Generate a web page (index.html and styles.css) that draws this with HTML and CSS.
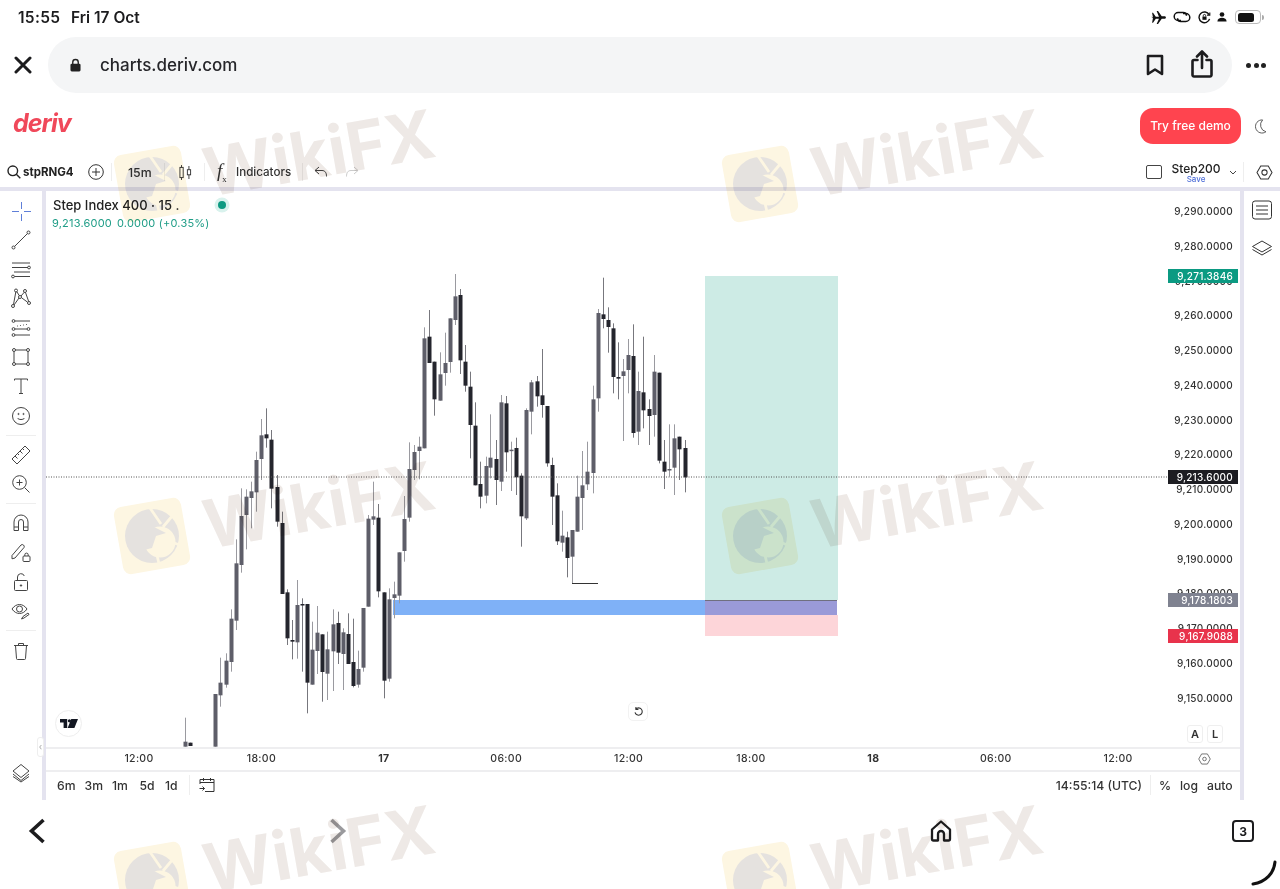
FILE: index.html
```html
<!DOCTYPE html>
<html lang="en">
<head>
<meta charset="utf-8">
<title>charts.deriv.com</title>
<link rel="stylesheet" href="styles.css">
</head>
<body>
<div class="page">
  <div class="status">
    <span class="clock">15:55</span><span class="date">Fri 17 Oct</span>
    <div class="status-icons">
      <svg class="i-plane" viewBox="0 0 16 14"><path d="M0 6l2 1-.9-5h1l3 4.300h3.400L6 0h1.500l4 5.600h2.700c1 0 1.800.6 1.800 1.400s-.8 1.400-1.800 1.400h-2.700L7.500 14H6l2.500-5.600H5.100L2.100 12.600h-1L2 7.700z" fill="#111"/></svg>
      <svg class="i-link" viewBox="0 0 18 12" fill="none" stroke="#111" stroke-width="1.500"><path d="M8 9.500H5.200a4 4 0 0 1 0-8h5a3.300 3.300 0 0 1 3.300 3.200"/><path d="M10 2.500h2.800a4 4 0 0 1 0 8h-5a3.300 3.300 0 0 1-3.300-3.200"/></svg>
      <svg class="i-lock" viewBox="0 0 14 14" fill="none" stroke="#111" stroke-width="1.500"><path d="M12.500 8.500A5.800 5.800 0 1 1 12 4"/><path d="M12.700 1.500V4.500H9.700" stroke-width="1.200"/><rect x="4.800" y="6" width="4.400" height="3.500" fill="#111" stroke="none"/><path d="M5.700 6V5a1.300 1.300 0 0 1 2.600 0v1" stroke-width="1"/></svg>
      <svg class="i-person" viewBox="0 0 12 12"><circle cx="6" cy="3" r="2.800" fill="#111"/><path d="M.5 11.500c0-3 2.500-4.500 5.500-4.500s5.500 1.500 5.500 4.500z" fill="#111"/></svg>
      <div class="battery"><div class="battery-fill"></div></div><div class="battery-nub"></div>
    </div>
  </div>

  <div class="browser">
    <svg class="i-close" viewBox="0 0 18 18" fill="none" stroke="#1c1c1e" stroke-width="3" stroke-linecap="round"><path d="M2 2l14 14M16 2L2 16"/></svg>
    <div class="pill">
      <svg class="i-padlock" viewBox="0 0 12 14"><rect x="0.500" y="5.500" width="11" height="8.500" rx="1.500" fill="#222"/><path d="M3 6V4a3 3 0 0 1 6 0v2" fill="none" stroke="#222" stroke-width="1.500"/></svg>
      <span class="url">charts.deriv.com</span>
      <svg class="i-bookmark" viewBox="0 0 18 22" fill="none" stroke="#1c1c1e" stroke-width="2.600" stroke-linejoin="round"><path d="M2 2h14v18l-7-4.500L2 20z"/></svg>
      <svg class="i-share" viewBox="0 0 22 28" fill="none" stroke="#1c1c1e" stroke-width="2.600" stroke-linecap="round" stroke-linejoin="round"><path d="M6.500 10H3a1.500 1.500 0 0 0-1.500 1.500v13.500A1.500 1.500 0 0 0 3 26.500h16a1.500 1.500 0 0 0 1.500-1.500V11.500A1.500 1.500 0 0 0 19 10h-3.500"/><path d="M11 18V2M6 6.500L11 1.500l5 5"/></svg>
    </div>
    <div class="more"><i></i><i></i><i></i></div>
  </div>

  <header class="site">
    <span class="logo">deriv</span>
    <button class="demo">Try free demo</button>
    <svg class="i-moon" viewBox="0 0 16 18" fill="none" stroke="#555" stroke-width="1.100"><path d="M11 1.500A7.500 7.500 0 1 0 14.800 15 8 8 0 0 1 11 1.500z"/></svg>
  </header>

  <div class="toolbar">
    <svg class="i-search" viewBox="0 0 14 14" fill="none" stroke="#222" stroke-width="1.400"><circle cx="5.800" cy="5.800" r="4.800"/><path d="M9.300 9.300L13.300 13.300"/></svg>
    <span class="symbol">stpRNG4</span>
    <svg class="i-plus" viewBox="0 0 16 16" fill="none" stroke="#333" stroke-width="1"><circle cx="8" cy="8" r="7.300"/><path d="M8 4v8M4 8h8"/></svg>
    <span class="sep sep-a"></span>
    <span class="tb-text tf">15m</span>
    <span class="sep sep-b"></span>
    <svg class="i-candles" viewBox="0 0 14 16" fill="none" stroke="#333" stroke-width="1"><rect x="1" y="2.500" width="3.500" height="11"/><path d="M2.700 0v2.500M2.700 13.500V16"/><rect x="9" y="5" width="3.500" height="5.500"/><path d="M10.700 1v4M10.700 10.500V15"/></svg>
    <span class="sep sep-c"></span>
    <span class="fx"><em>f</em><sub>x</sub></span>
    <span class="tb-text indicators">Indicators</span>
    <span class="sep sep-d"></span>
    <svg class="i-undo" viewBox="0 0 14 12" fill="none" stroke="#444" stroke-width="1"><path d="M5 1L1 4.500 5 8"/><path d="M1 4.500h7c3 0 4.500 2 4.500 6"/></svg>
    <svg class="i-redo" viewBox="0 0 14 12" fill="none" stroke="#ccc" stroke-width="1"><path d="M9 1l4 3.500L9 8"/><path d="M13 4.500H6C3 4.500 1.500 6.500 1.500 10.500"/></svg>
    <svg class="i-check" viewBox="0 0 16 14" fill="none" stroke="#444" stroke-width="1"><rect x="0.500" y="0.500" width="15" height="13" rx="1.500"/></svg>
    <div class="template"><span class="template-name">Step200</span><span class="template-save">Save</span></div>
    <svg class="i-chev" viewBox="0 0 8 5" fill="none" stroke="#444" stroke-width="1"><path d="M1 1l3 3 3-3"/></svg>
    <span class="sep sep-e"></span>
    <svg class="i-hex" viewBox="0 0 18 16" fill="none" stroke="#333" stroke-width="1.100"><path d="M5 1h8l4 7-4 7H5L1 8z"/><circle cx="9" cy="8" r="2.800"/></svg>
  </div>

  <div class="workspace">
    <aside class="tools">
      <svg class="tool" viewBox="0 0 20 20" fill="none" stroke="#5f7fd8" stroke-width="1"><path d="M10.500 1v7M10.500 13v7M1 10.500h7M13 10.500h7"/></svg>
      <svg class="tool" viewBox="0 0 20 20" fill="none" stroke="#444" stroke-width="1"><circle cx="2.500" cy="17.500" r="1.500"/><circle cx="17.500" cy="2.500" r="1.500"/><path d="M3.600 16.400L16.400 3.600"/></svg>
      <svg class="tool" viewBox="0 0 20 20" fill="none" stroke="#444" stroke-width="1"><path d="M1 4h18M1 8.500h16M3 13h16M3.500 17.500H19"/><circle cx="18" cy="8.500" r="1.400"/><circle cx="2" cy="17.500" r="1.400"/></svg>
      <svg class="tool" viewBox="0 0 20 20" fill="none" stroke="#444" stroke-width="1"><circle cx="2" cy="18" r="1.500"/><circle cx="5" cy="2.500" r="1.500"/><circle cx="14" cy="3" r="1.500"/><circle cx="18" cy="15" r="1.500"/><circle cx="9" cy="9" r="1.500"/><path d="M2.500 16.500L4.800 4M5.800 3.700L8.300 7.700M10 8l3.300-3.800M14.500 4.500L17.700 13.500M10.400 9.600L16.700 14.300M3 17L8 10"/></svg>
      <svg class="tool" viewBox="0 0 20 20" fill="none" stroke="#444" stroke-width="1"><circle cx="2.500" cy="3" r="1.400"/><circle cx="2.500" cy="11" r="1.400"/><circle cx="17.500" cy="11" r="1.400"/><circle cx="2.500" cy="17" r="1.400"/><path d="M4 3h15M4 11h12M4 17h15"/><path d="M6 8h1M9 7.500h1M12 7h1M15 6.500h1" stroke-width="0.800"/></svg>
      <svg class="tool" viewBox="0 0 20 20" fill="none" stroke="#444" stroke-width="1"><rect x="3" y="3" width="14" height="14"/><circle cx="3" cy="3" r="1.500" fill="#fff"/><circle cx="17" cy="3" r="1.500" fill="#fff"/><circle cx="3" cy="17" r="1.500" fill="#fff"/><circle cx="17" cy="17" r="1.500" fill="#fff"/></svg>
      <svg class="tool" viewBox="0 0 20 20" fill="none" stroke="#444" stroke-width="1"><path d="M3.500 4.500V3h13v1.500M10 3v14M8 17.500h4"/></svg>
      <svg class="tool" viewBox="0 0 20 20" fill="none" stroke="#444" stroke-width="1"><circle cx="10" cy="10" r="8.500"/><path d="M6.500 12c1 2 6 2 7 0"/><circle cx="7.500" cy="8" r=".6"/><circle cx="12.500" cy="8" r=".6"/></svg>
      <div class="tool-sep"></div>
      <svg class="tool" viewBox="0 0 20 20" fill="none" stroke="#444" stroke-width="1"><path d="M1 14L14 1l5 5L6 19z"/><path d="M4 11l2.500 2.500M6.500 8.500l1.500 1.500M9 6l2.500 2.500M11.500 3.500L13 5"/></svg>
      <svg class="tool" viewBox="0 0 20 20" fill="none" stroke="#444" stroke-width="1"><circle cx="8.500" cy="8.500" r="6.800"/><path d="M8.500 5.500v6M5.500 8.500h6M13.500 13.500l5 5"/></svg>
      <div class="tool-sep"></div>
      <svg class="tool" viewBox="0 0 20 20" fill="none" stroke="#444" stroke-width="1"><path d="M3 17.500V9a7 7 0 0 1 14 0v8.500h-4.500V9a2.500 2.500 0 0 0-5 0v8.500z"/><path d="M3 14h4.500M12.500 14H17"/></svg>
      <svg class="tool" viewBox="0 0 20 20" fill="none" stroke="#444" stroke-width="1"><path d="M1 12.500L10 2a2 2 0 0 1 3 2.500L4 15l-3 .8z"/><rect x="12" y="13" width="7" height="5.500" rx="1"/><path d="M13.800 13v-1.200a1.700 1.700 0 0 1 3.400 0V13"/></svg>
      <svg class="tool" viewBox="0 0 20 20" fill="none" stroke="#444" stroke-width="1"><rect x="3.500" y="8.500" width="13" height="10" rx="1"/><path d="M6.500 8.500V5a3.500 3.500 0 0 1 6.800-1"/><circle cx="10" cy="13.500" r=".7" fill="#444"/></svg>
      <svg class="tool" viewBox="0 0 20 20" fill="none" stroke="#444" stroke-width="1"><path d="M1 8c4-6 11-6 15 0-4 6-11 6-15 0z"/><circle cx="8.500" cy="8" r="3"/><path d="M10.500 18l2.500-1 5-3.500-1-1.500-5 3.500z"/></svg>
      <div class="tool-sep"></div>
      <svg class="tool" viewBox="0 0 20 20" fill="none" stroke="#444" stroke-width="1"><path d="M3 4.500h14M7.500 4.500V2.500h5v2M4.500 4.500l1 13a1 1 0 0 0 1 1h7a1 1 0 0 0 1-1l1-13"/></svg>
      <svg class="tool tool-bottom" viewBox="0 0 20 20" fill="none" stroke="#444" stroke-width="1"><path d="M10 1.500L18 8l-8 6.500L2 8z"/><path d="M2 11l8 6.500 8-6.500M2 13.500l8 5.500 8-5.500"/></svg>
    </aside>

    <main class="chart-col">
      <div class="chart">
        <svg id="plot" class="plot" viewBox="46 191 1194 556">
          <rect x="705" y="276" width="133" height="324" fill="#cdebe5"/>
          <rect x="393" y="600" width="312" height="15" fill="#7fb1f7"/>
          <rect x="705" y="600" width="132" height="15" fill="#9a9ad8"/>
          <rect x="705" y="615" width="133" height="21" fill="#fdd5d9"/>
          <path d="M705 600.500H837" stroke="#6f6f80"/>
          <g id="candles"></g>
          <path d="M46 477H1168" stroke="#555" stroke-dasharray="1 1.500"/>
          <g id="axis" class="axis"></g>
          <rect x="1168" y="269" width="70" height="14" fill="#0b9a82"/>
          <text class="tag" x="1233" y="280">9,271.3846</text>
          <rect x="1168" y="470" width="70" height="14" fill="#1d1d22"/>
          <text class="tag" x="1233" y="481">9,213.6000</text>
          <rect x="1168" y="593" width="70" height="14" fill="#7f8290"/>
          <text class="tag" x="1233" y="604">9,178.1803</text>
          <rect x="1168" y="629" width="70" height="14" fill="#e8334c"/>
          <text class="tag" x="1233" y="640">9,167.9088</text>
        </svg>
        <div class="legend">
          <div class="legend-title">Step Index 400 · 15 .</div>
          <div class="legend-price"><span>9,213.6000</span><span>0.0000 (+0.35%)</span></div>
        </div>
        <span class="live"></span>
        <div class="tv">
          <svg viewBox="0 0 20 12"><path d="M0 1h8v10H4V5H0zM8.500 11L12.500 1H20l-4 10z" fill="#131722"/><circle cx="10.500" cy="3" r="1.800" fill="#131722"/></svg>
        </div>
        <div class="reset">
          <svg viewBox="0 0 12 12" fill="none" stroke="#333" stroke-width="1.200"><path d="M3 3.500a4 4 0 1 1-.8 3.500"/><path d="M3.200 1v2.700h2.700"/></svg>
        </div>
        <div class="scale-btns"><span>A</span><span>L</span></div>
        <div class="handle">‹</div>
      </div>
      <div class="time-axis">
        <span>12:00</span><span>18:00</span><b>17</b><span>06:00</span><span>12:00</span><span>18:00</span><b>18</b><span>06:00</span><span>12:00</span>
        <svg class="i-hex-small" viewBox="0 0 18 16" fill="none" stroke="#555" stroke-width="1.100"><path d="M5 1h8l4 7-4 7H5L1 8z"/><circle cx="9" cy="8" r="2.500"/></svg>
      </div>
      <div class="range-bar">
        <span class="r">6m</span><span class="r">3m</span><span class="r">1m</span><span class="r">5d</span><span class="r">1d</span>
        <span class="range-sep"></span>
        <svg class="i-cal" viewBox="0 0 16 16" fill="none" stroke="#333" stroke-width="1"><path d="M1 7V2.500h14V14.500H6M1 5.500h14M4.500 1v3M11.500 1v3M0.500 11.500h5M3.500 9.500l2 2-2 2"/></svg>
        <span class="clock-utc">14:55:14 (UTC)</span>
        <span class="range-sep range-sep-b"></span>
        <span class="r pct">%</span><span class="r log">log</span><span class="r auto">auto</span>
      </div>
    </main>

    <aside class="side">
      <svg class="side-icon" viewBox="0 0 20 20" fill="none" stroke="#333" stroke-width="1"><rect x="0.500" y="1" width="19" height="18" rx="2.500"/><path d="M4 6h12M4 10h12M4 14h12"/></svg>
      <svg class="side-icon" viewBox="0 0 20 20" fill="none" stroke="#333" stroke-width="1"><path d="M10 3l9.500 5.500L10 14 .5 8.500z"/><path d="M.5 11.500L10 17l9.500-5.500"/></svg>
    </aside>
  </div>

  <nav class="nav">
    <svg class="nav-back" viewBox="0 0 18 26" fill="none" stroke="#1c1c1e" stroke-width="3.600"><path d="M15.500 2L3.500 13l12 11"/></svg>
    <svg class="nav-fwd" viewBox="0 0 18 26" fill="none" stroke="#9a9a9d" stroke-width="3.600"><path d="M2.500 2l12 11-12 11"/></svg>
    <svg class="nav-home" viewBox="0 0 22 22" fill="none" stroke="#1c1c1e" stroke-width="2.300" stroke-linejoin="round"><path d="M11 1.500L2 9.500V19a1.500 1.500 0 0 0 1.500 1.500H8V14a3 3 0 0 1 6 0v6.500h4.500A1.500 1.500 0 0 0 20 19V9.500z"/></svg>
    <div class="nav-tabs">3</div>
    <svg class="nav-corner" viewBox="0 0 26 26" fill="none" stroke="#111" stroke-width="3" stroke-linecap="round"><path d="M24 2c-1 11-9 20-22 22"/></svg>
  </nav>

  <svg class="watermark" viewBox="0 0 1280 889">
    <defs>
      <g id="wm">
        <rect x="-34" y="-34" width="68" height="68" rx="8" transform="rotate(-10)" fill="#fdf6e2"/>
        <circle r="27" fill="#e5e2df"/>
        <circle cx="8" cy="6" r="15.500" fill="#fdf6e2"/>
        <path d="M-8-14L14-3 4 0 0 12-8 14z" fill="#e5e2df"/>
        <path d="M-2-28L9-12M21-21L11-9M28 9L19 6M7 28L5 19" fill="none" stroke="#fdf6e2" stroke-width="2.800"/>
        <text class="wm-text" x="56" y="13" transform="rotate(-10 56 13)">WikiFX</text>
      </g>
    </defs>
    <use href="#wm" x="152" y="184"/>
    <use href="#wm" x="760" y="184"/>
    <use href="#wm" x="152" y="536"/>
    <use href="#wm" x="760" y="536"/>
    <use href="#wm" x="152" y="880"/>
    <use href="#wm" x="760" y="880"/>
  </svg>
</div>
<script src="chart.js"></script>
</body>
</html>
```

FILE: styles.css
```css
* { box-sizing: border-box; }
html, body { margin: 0; padding: 0; background: #fff; }
body { font-family: Inter, "Liberation Sans", sans-serif; color: #1c1c1e; overflow: hidden; }
svg { display: block; flex: none; }
.page { position: relative; width: 1280px; height: 889px; display: flex; flex-direction: column; overflow: hidden; }

/* status bar */
.status { height: 37px; display: flex; align-items: center; padding: 0 16px 3px 18px; font-size: 15.500px; font-weight: 600; }
.clock { width: 53px; letter-spacing: .3px; }
.status-icons { margin-left: auto; display: flex; align-items: center; }
.i-plane { width: 15px; height: 13px; }
.i-link { width: 18px; height: 12px; margin-left: 7px; }
.i-lock { width: 13px; height: 13px; margin-left: 7px; }
.i-person { width: 10px; height: 10px; margin-left: 6px; }
.battery { width: 26px; height: 14px; margin-left: 8px; border: 1px solid #bbb; border-radius: 4px; padding: 1.500px; }
.battery-fill { width: 16px; height: 100%; background: #111; border-radius: 2.500px; }
.battery-nub { width: 2px; height: 5px; background: #aaa; border-radius: 0 2px 2px 0; margin-left: 1px; }

/* browser bar */
.browser { height: 56px; display: flex; align-items: center; padding-left: 14px; }
.i-close { width: 18px; height: 18px; }
.pill { width: 1184px; height: 56px; margin-left: 16px; background: #f4f5f6; border-radius: 28px; display: flex; align-items: center; padding: 0 19px 0 22px; }
.i-padlock { width: 11px; height: 14px; }
.url { margin-left: 19px; font-size: 17px; font-weight: 500; color: #26262a; }
.i-bookmark { width: 18px; height: 22px; margin-left: auto; }
.i-share { width: 22px; height: 28px; margin-left: 27px; margin-top: -2px; }
.more { display: flex; gap: 2.500px; margin-left: 14px; }
.more i { width: 5px; height: 5px; background: #222; border-radius: 50%; }

/* deriv header */
.site { height: 57px; display: flex; align-items: center; padding: 3px 13px 0 13px; }
.logo { font-size: 25px; font-weight: 700; font-style: italic; color: #f0485a; letter-spacing: -1px; }
.demo { margin-left: auto; width: 101px; height: 36px; margin-top: 5px; border: 0; border-radius: 13px; background: #ff444f; color: #fff; font: 500 12px Inter, sans-serif; padding: 0; }
.i-moon { width: 14px; height: 17px; margin-left: 12px; margin-top: 7px; }

/* toolbar */
.toolbar { height: 41px; display: flex; align-items: center; padding-left: 7px; padding-top: 7px; border-bottom: 4px solid #e4e3ef; }
.i-search { width: 14px; height: 14px; }
.symbol { margin-left: 2px; width: 54px; font-size: 11.500px; font-weight: 700; color: #222; white-space: nowrap; overflow: hidden; }
.i-plus { width: 16px; height: 16px; margin-left: 11px; }
.sep { width: 1px; height: 18px; background: #eee; }
.sep-a { margin-left: 7px; }
.tb-text { font-size: 12.300px; font-weight: 500; color: #333; }
.tf { margin-left: 16px; width: 25px; }
.sep-b { margin-left: 11px; }
.i-candles { width: 13px; height: 15px; margin-left: 14px; }
.sep-c { margin-left: 12px; }
.fx { margin-left: 12px; width: 19px; font-family: "Liberation Serif", serif; font-size: 19px; color: #333; line-height: 1; white-space: nowrap; }
.fx sub { font-size: 9px; }
.indicators { font-size: 11.600px; width: 55px; }
.sep-d { margin-left: 11px; }
.i-undo { width: 14px; height: 12px; margin-left: 11px; }
.i-redo { width: 14px; height: 12px; margin-left: 17px; }
.i-check { width: 16px; height: 14px; margin-left: auto; }
.template { width: 48px; margin-left: 10px; display: flex; flex-direction: column; align-items: center; line-height: 1; margin-top: 2px; }
.template-name { font-size: 12px; font-weight: 500; color: #222; }
.template-save { font-size: 8px; font-weight: 500; color: #4f6fd8; }
.i-chev { width: 8px; height: 5px; margin-left: 9px; }
.sep-e { margin-left: 6px; height: 20px; }
.i-hex { width: 17px; height: 15px; margin-left: 12px; margin-right: 7px; }

/* workspace */
.workspace { height: 609px; display: flex; }
.tools { width: 46px; border-right: 4px solid #e4e3ef; display: flex; flex-direction: column; align-items: center; padding: 5px 0 12px; }
.tool { width: 20px; height: 20px; margin: 4.650px 0; }
.tool-sep { width: 30px; height: 1px; margin: 4.500px 0; background: #eee; }
.tool-bottom { margin-top: auto; }

.chart-col { width: 1194px; display: flex; flex-direction: column; }
.chart { position: relative; height: 556px; }
.plot { position: absolute; inset: 0; width: 1194px; height: 556px; }
.axis text { font: 500 10px Inter, sans-serif; fill: #333; text-anchor: end; letter-spacing: .25px; }
.tag { font: 500 10px Inter, sans-serif; fill: #fff; text-anchor: end; letter-spacing: .25px; }
.legend { position: absolute; left: 7px; top: 6px; }
.legend-title { font-size: 13px; font-weight: 500; color: #222; line-height: 16px; }
.legend-price { display: flex; gap: 5px; margin-top: 4px; margin-left: -1px; font-size: 11px; color: #1f9d87; line-height: 13px; letter-spacing: .2px; }
.live { position: absolute; left: 172px; top: 10px; width: 8px; height: 8px; border-radius: 50%; background: #0e9a82; box-shadow: 0 0 0 3.500px #d9f2ed; }
.tv { position: absolute; left: 9px; top: 519px; width: 27px; height: 27px; border-radius: 50%; background: #fff; border: 1px solid #eee; display: flex; align-items: center; justify-content: center; }
.tv svg { width: 18px; height: 11px; }
.reset { position: absolute; left: 582px; top: 511px; width: 20px; height: 19px; border-radius: 5px; background: #fff; border: 1px solid #f2f2f2; display: flex; align-items: center; justify-content: center; }
.reset svg { width: 11px; height: 11px; }
.scale-btns { position: absolute; right: 17px; top: 534px; display: flex; gap: 4px; }
.scale-btns span { width: 16px; height: 18px; border: 1px solid #efefef; border-radius: 3px; background: #fff; font-size: 11px; font-weight: 600; color: #333; display: flex; align-items: center; justify-content: center; }
.handle { position: absolute; left: -9px; top: 546px; width: 7px; height: 20px; border-radius: 3px; background: #fff; border: 1px solid #eee; font-size: 9px; line-height: 17px; text-align: center; color: #aaa; }

.time-axis { height: 23px; border-top: 2px solid #eeeef0; display: flex; align-items: center; padding: 0 0 2px 31.800px; font-size: 10.500px; font-weight: 500; color: #333; letter-spacing: .3px; }
.time-axis span, .time-axis b { width: 122.400px; text-align: center; flex: none; }
.time-axis b { font-weight: 700; }
.i-hex-small { width: 13px; height: 12px; margin-left: 19px; }

.range-bar { height: 30px; border-top: 2px solid #eeeef0; display: flex; align-items: center; padding: 0 8px 2px 11px; font-size: 12.200px; font-weight: 500; color: #333; }
.r { margin-right: 9.500px; width: 18px; }
.r:nth-child(4), .r:nth-child(5) { width: 16px; }
.range-sep { width: 1px; height: 20px; background: #eee; margin-left: -2px; }
.i-cal { width: 16px; height: 16px; margin-left: 9px; }
.clock-utc { margin-left: auto; }
.range-sep-b { margin-left: 8px; }
.pct { margin: 0 0 0 8px; width: 11px; }
.log { margin: 0 0 0 10px; width: 17px; }
.auto { margin: 0 0 0 10px; width: 25px; }

.side { width: 40px; border-left: 4px solid #e4e3ef; display: flex; flex-direction: column; align-items: center; padding: 9px 0 0; gap: 18px; }
.side-icon { width: 20px; height: 20px; }

/* bottom nav */
.nav { position: relative; flex: 1; display: flex; align-items: center; padding: 0 0 27px 28px; }
.nav-back { width: 18px; height: 26px; }
.nav-fwd { width: 18px; height: 26px; margin-left: 283px; }
.nav-home { width: 22px; height: 22px; margin-left: 583px; }
.nav-tabs { width: 22px; height: 22px; margin-left: 280px; border: 2px solid #1c1c1e; border-radius: 4px; font-size: 12px; font-weight: 700; display: flex; align-items: center; justify-content: center; }
.nav-corner { position: absolute; right: 3px; bottom: 3px; width: 26px; height: 26px; }

/* watermark */
.watermark { position: absolute; inset: 0; width: 1280px; height: 889px; mix-blend-mode: multiply; pointer-events: none; }
.wm-text { font: 700 67px Inter, sans-serif; fill: #eee9e6; }
```

FILE: chart.js
```js
// Candles read as [x, bodyTop, bodyBottom, wickTop, wickBottom, dark?]
var LEFT = [
  [554,755,770,683,770,0],[570,758,768,758,768,1]
].map(function (c) { return [c[0]/3, c[1]/3+490, c[2]/3+490, c[3]/3+490, c[4]/3+490, c[5]]; });

var MID = [
  [45,912,1070,912,1070,0],[61,878,916,803,950,0],[77,812,884,790,893,0],[92,686,816,658,845,0],
  [107,520,692,448,720,0],[122,378,525,295,548,0],[138,320,375,298,478,0],[153,304,324,275,415,0],
  [168,210,307,185,365,0],[183,136,207,87,270,0],[199,133,145,55,173,1],[214,149,296,120,355,1],
  [230,291,395,255,410,1],[245,399,612,365,612,1],[260,607,745,598,765,1],[275,750,755,690,808,1],
  [291,645,757,570,806,0],[306,642,646,625,845,1],[321,642,878,642,970,1],[337,779,884,695,884,0],
  [352,728,783,648,852,0],[367,733,846,733,935,1],[382,778,851,725,930,0],[398,703,784,658,903,0],
  [413,699,788,665,822,1],[428,727,792,715,900,0],[443,732,822,670,822,1],[459,816,888,686,892,1],
  [474,837,884,782,893,0],[489,654,833,654,845,0],[504,386,650,375,650,0],[520,379,389,275,405,0],
  [535,383,604,342,622,1],[551,607,872,607,925,1],[566,628,866,595,875,0],[581,613,624,575,685,0],
  [597,487,617,487,640,0],[612,387,483,318,515,0],[627,237,383,157,395,0],[642,186,240,165,270,0],
  [658,170,183,140,268,0]
].map(function (c) { return [c[0]/3+200, c[1]/3+390, c[2]/3+390, c[3]/3+390, c[4]/3+390, c[5]]; });

var RIGHT = [
  [73,220,550,187,550,0],[88,215,294,135,294,1],[103,290,403,290,452,1],[119,328,407,262,407,0],
  [134,294,324,203,362,0],[149,160,291,160,323,0],[165,94,165,27,180,0],[180,90,286,72,327,1],
  [196,290,362,240,380,1],[211,365,480,320,580,1],[226,482,661,412,661,1],[241,657,695,590,730,1],
  [257,603,692,575,715,0],[271,578,608,448,640,0],[287,582,645,525,720,1],[302,412,650,390,678,0],
  [318,415,562,393,620,1],[333,554,557,530,678,0],[348,549,637,518,690,1],[364,632,754,625,845,1],
  [379,435,760,430,765,0],[394,352,440,345,508,0],[410,349,394,333,425,1],[425,391,420,252,458,1],
  [440,423,595,423,605,1],[456,600,695,578,780,1],[471,691,829,655,840,1],[486,812,833,737,860,0],
  [501,817,879,800,937,1],[517,795,875,795,955,0],[532,695,800,632,800,0],[547,661,699,558,795,0],
  [562,620,658,530,675,0],[578,403,624,362,685,0],[593,144,400,132,440,0],[608,148,162,38,190,1],
  [624,165,186,127,263,1],[639,190,336,175,385,1],[654,336,341,232,403,1],[669,319,333,282,528,0],
  [685,270,315,222,385,0],[700,273,504,178,518,1],[715,378,500,320,540,0],[730,382,436,215,490,1],
  [746,432,453,403,540,1],[761,320,450,270,515,0],[777,323,587,323,595,1],[792,590,620,525,672,1],
  [807,612,615,478,635,0],[823,520,608,478,690,0],[838,515,553,515,645,1],[854,549,637,525,682,1]
].map(function (c) { return [c[0]/3+400, c[1]/3+265, c[2]/3+265, c[3]/3+265, c[4]/3+265, c[5]]; });

var NS = 'http://www.w3.org/2000/svg';
function el(parent, name, attrs, text) {
  var n = document.createElementNS(NS, name);
  for (var k in attrs) n.setAttribute(k, attrs[k]);
  if (text) n.textContent = text;
  parent.appendChild(n);
  return n;
}

var g = document.getElementById('candles');
LEFT.concat(MID, RIGHT).forEach(function (c) {
  var x = Math.round(c[0]);
  el(g, 'rect', { x: x, y: c[3], width: 1, height: c[4] - c[3], fill: c[5] ? '#77777d' : '#9a9aa0' });
  el(g, 'rect', { x: x - 1.5, y: c[1], width: 4, height: Math.max(c[2] - c[1], 1.5), fill: c[5] ? '#24252d' : '#5e5e69' });
});
el(g, 'path', { d: 'M572 583.5H598', stroke: '#333', fill: 'none' });

var axis = document.getElementById('axis');
var labels = ['9,290.0000','9,280.0000','9,270.0000','9,260.0000','9,250.0000','9,240.0000','9,230.0000','9,220.0000','9,210.0000','9,200.0000','9,190.0000','9,180.0000','9,170.0000','9,160.0000','9,150.0000'];
labels.forEach(function (t, i) {
  el(axis, 'text', { x: 1233, y: 215 + i * 34.75 }, t);
});
```
